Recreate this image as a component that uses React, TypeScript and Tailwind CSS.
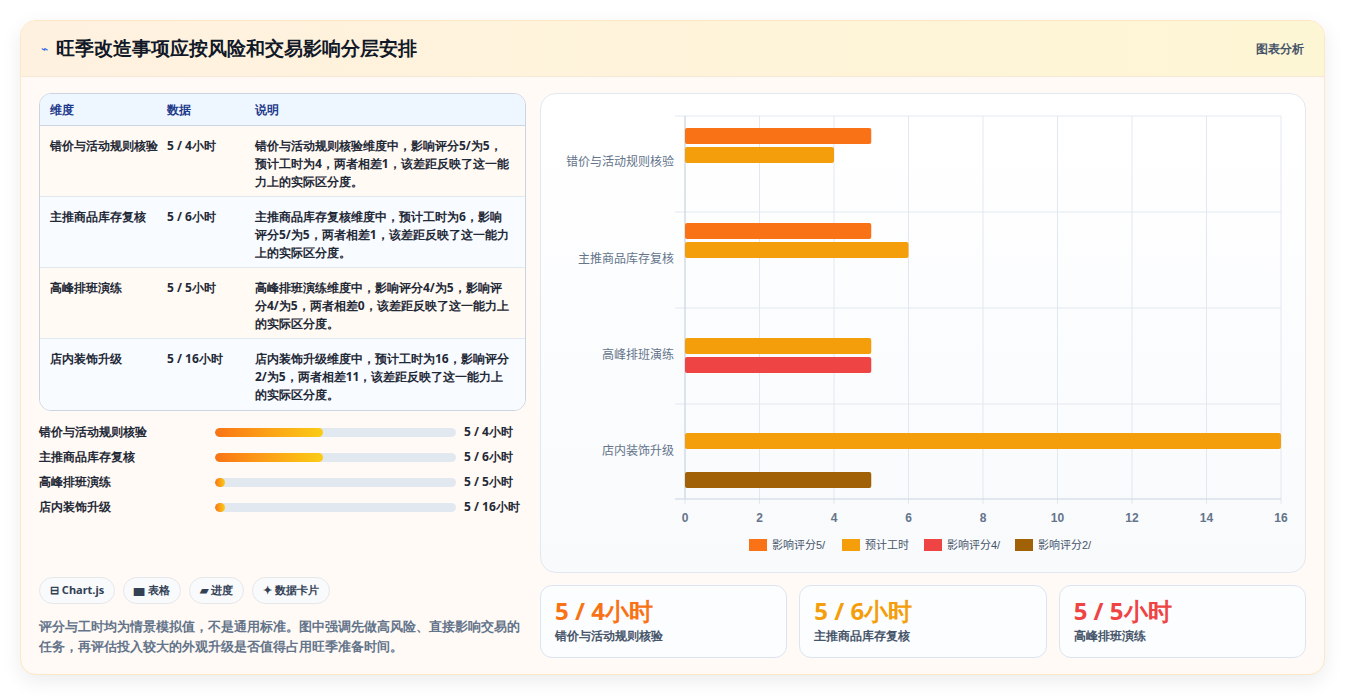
import React from "react";

const ROWS = [
  { name: "错价与活动规则核验", nameWrap: true, data: "5 / 4小时", desc: "错价与活动规则核验维度中，影响评分5/为5，预计工时为4，两者相差1，该差距反映了这一能力上的实际区分度。", bg: "bg-[#fffaf3]" },
  { name: "主推商品库存复核", data: "5 / 6小时", desc: "主推商品库存复核维度中，预计工时为6，影响评分5/为5，两者相差1，该差距反映了这一能力上的实际区分度。", bg: "bg-[#f8fbff]" },
  { name: "高峰排班演练", data: "5 / 5小时", desc: "高峰排班演练维度中，影响评分4/为5，影响评分4/为5，两者相差0，该差距反映了这一能力上的实际区分度。", bg: "bg-[#fffaf3]" },
  { name: "店内装饰升级", data: "5 / 16小时", desc: "店内装饰升级维度中，预计工时为16，影响评分2/为5，两者相差11，该差距反映了这一能力上的实际区分度。", bg: "bg-[#f8fbff]" },
];

const PROGRESS = [
  { name: "错价与活动规则核验", w: "45%", v: "5 / 4小时" },
  { name: "主推商品库存复核", w: "45%", v: "5 / 6小时" },
  { name: "高峰排班演练", w: "4%", v: "5 / 5小时" },
  { name: "店内装饰升级", w: "4%", v: "5 / 16小时" },
];

const X0 = 144, PX = 37.25;
const BARS = [
  { y: 34, v: 5, c: "#f97316" }, { y: 53, v: 4, c: "#f59e0b" },
  { y: 129, v: 5, c: "#f97316" }, { y: 148, v: 6, c: "#f59e0b" },
  { y: 244, v: 5, c: "#f59e0b" }, { y: 263, v: 5, c: "#ef4444" },
  { y: 339, v: 16, c: "#f59e0b" }, { y: 378, v: 5, c: "#a16207" },
];
const CATS = [
  { y: 72, t: "错价与活动规则核验" }, { y: 169, t: "主推商品库存复核" },
  { y: 265, t: "高峰排班演练" }, { y: 361, t: "店内装饰升级" },
];
const LEGEND = [
  { x: 208, c: "#f97316", t: "影响评分5/" }, { x: 301, c: "#f59e0b", t: "预计工时" },
  { x: 383, c: "#ef4444", t: "影响评分4/" }, { x: 474, c: "#a16207", t: "影响评分2/" },
];

function Chart() {
  const ticks = [0, 2, 4, 6, 8, 10, 12, 14, 16];
  return (
    <svg width="764" height="479" viewBox="0 0 764 479" style={{ fontFamily: "'Liberation Sans','Noto Sans CJK SC',sans-serif" }}>
      {ticks.map((t) => (
        <line key={t} x1={X0 + t * PX} x2={X0 + t * PX} y1={22} y2={410} stroke="#e2e8f0" />
      ))}
      {[22, 118, 214, 310].map((y) => (
        <line key={y} x1={134} x2={740} y1={y} y2={y} stroke="#e2e8f0" />
      ))}
      <line x1={134} x2={740} y1={405} y2={405} stroke="#cbd5e1" />
      <line x1={X0} x2={X0} y1={22} y2={405} stroke="#cbd5e1" />
      {BARS.map((b, i) => (
        <rect key={i} x={X0} y={b.y} width={b.v * PX} height={16} rx={2} fill={b.c} />
      ))}
      {CATS.map((c) => (
        <text key={c.t} x={133} y={c.y} textAnchor="end" fontSize="12" fill="#64748b">{c.t}</text>
      ))}
      {ticks.map((t) => (
        <text key={t} x={X0 + t * PX} y={428} textAnchor="middle" fontSize="12" fontWeight="bold" fill="#64748b">{t}</text>
      ))}
      {LEGEND.map((l) => (
        <g key={l.t}>
          <rect x={l.x} y={445} width={18} height={12} fill={l.c} />
          <text x={l.x + 23} y={455} fontSize="11" fill="#475569">{l.t}</text>
        </g>
      ))}
    </svg>
  );
}

export default function App() {
  return (
    <div className="w-[1345px] h-[696px] bg-white p-5 pb-5 font-['Liberation_Sans','Noto_Sans_CJK_SC',sans-serif]">
      <div className="h-[655px] rounded-2xl border border-[#fde7c7] bg-[#fffaf5] shadow-[0_6px_20px_rgba(0,0,0,0.08)] overflow-hidden flex flex-col">
        <div className="h-[56px] flex items-center justify-between px-5 bg-gradient-to-r from-[#fff1e0] to-[#fdf6d4] border-b border-[#f6e8d4]">
          <div className="flex items-center gap-2">
            <span className="text-[#2563eb] text-xs">⌁</span>
            <span className="text-[19px] font-bold text-[#111827]">旺季改造事项应按风险和交易影响分层安排</span>
          </div>
          <span className="text-xs font-bold text-[#475569]">图表分析</span>
        </div>
        <div className="flex-1 flex gap-[14px] pl-[18px] pr-[18px] pt-4">
          <div className="w-[489px] flex flex-col">
            <div className="rounded-xl border border-[#cbd5e1] overflow-hidden text-xs font-bold">
              <div className="h-[32px] flex items-center bg-[#eef6ff] text-[#1e3a8a] border-b border-[#cbd5e1]">
                <div className="w-[127px] pl-[10px]">维度</div>
                <div className="w-[88px]">数据</div>
                <div>说明</div>
              </div>
              {ROWS.map((r, i) => (
                <div key={i} className={`h-[71px] flex pt-[11px] leading-[18px] text-[#1f2937] ${r.bg} ${i < 3 ? "border-b border-[#e2e8f0]" : ""}`}>
                  <div className="w-[127px] pl-[10px] pr-2">{r.name}</div>
                  <div className="w-[88px]">{r.data}</div>
                  <div className="flex-1 pr-3">{r.desc}</div>
                </div>
              ))}
            </div>
            <div className="mt-[12px] flex flex-col gap-[7px] text-xs font-bold text-[#1f2937]">
              {PROGRESS.map((p) => (
                <div key={p.name} className="h-[18px] flex items-center">
                  <div className="w-[176px]">{p.name}</div>
                  <div className="w-[241px] h-[9px] rounded-full bg-[#e2e8f0] overflow-hidden">
                    <div className="h-full rounded-full bg-gradient-to-r from-[#f97316] to-[#facc15]" style={{ width: p.w }} />
                  </div>
                  <div className="ml-2">{p.v}</div>
                </div>
              ))}
            </div>
            <div className="mt-auto mb-[18px]">
              <div className="flex gap-2 text-[11px] font-bold text-[#334155]">
                {["⊟ Chart.js", "▆ 表格", "▰ 进度", "✦ 数据卡片"].map((c) => (
                  <span key={c} className="h-[27px] px-[10px] rounded-full border border-[#e5e7eb] bg-[#f8fafc] flex items-center">{c}</span>
                ))}
              </div>
              <p className="mt-3 text-[13px] leading-[20px] text-[#64748b] font-bold">评分与工时均为情景模拟值，不是通用标准。图中强调先做高风险、直接影响交易的任务，再评估投入较大的外观升级是否值得占用旺季准备时间。</p>
            </div>
          </div>
          <div className="flex-1 flex flex-col gap-3">
            <div className="h-[480px] rounded-2xl border border-[#e2e8f0] bg-gradient-to-b from-white to-[#f8fafc] overflow-hidden">
              <Chart />
            </div>
            <div className="grid grid-cols-3 gap-[12px]">
              {[
                { v: "5 / 4小时", c: "text-[#f97316]", t: "错价与活动规则核验" },
                { v: "5 / 6小时", c: "text-[#f59e0b]", t: "主推商品库存复核" },
                { v: "5 / 5小时", c: "text-[#ef4444]", t: "高峰排班演练" },
              ].map((s) => (
                <div key={s.t} className="h-[73px] rounded-xl border border-[#dbe5f1] bg-[#fbfdff] px-[14px] pt-[10px]">
                  <div className={`text-[24px] leading-[30px] font-bold ${s.c}`}>{s.v}</div>
                  <div className="text-xs font-bold text-[#475569] mt-0.5">{s.t}</div>
                </div>
              ))}
            </div>
          </div>
        </div>
      </div>
    </div>
  );
}
